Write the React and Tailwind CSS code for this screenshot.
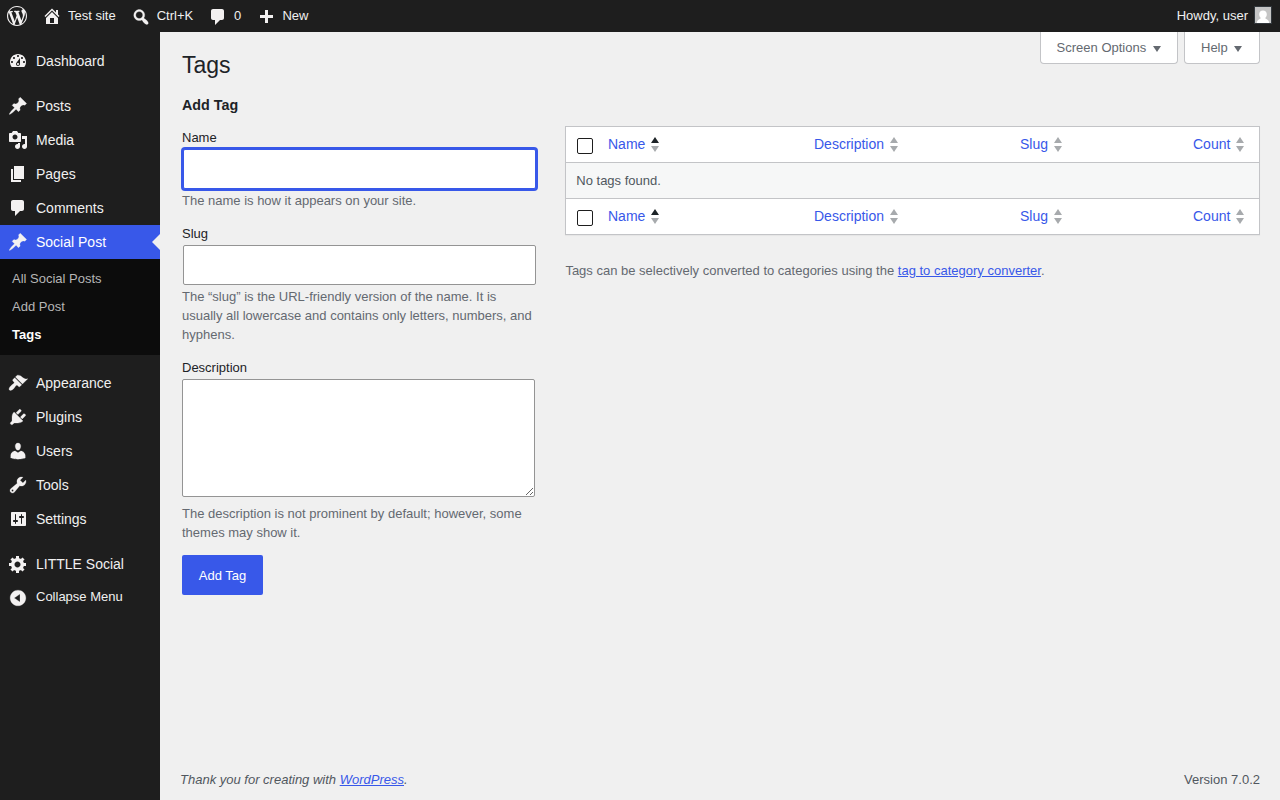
import React from "react";

const icons = {
	wordpress:
		"M20 10c0-5.51-4.49-10-10-10C4.48 0 0 4.49 0 10c0 5.52 4.48 10 10 10 5.51 0 10-4.48 10-10zM7.78 15.37L4.37 6.22c.55-.02 1.17-.08 1.17-.08.5-.06.44-1.13-.06-1.11 0 0-1.45.11-2.37.11-.18 0-.37 0-.58-.01C4.12 2.69 6.87 1.11 10 1.11c2.33 0 4.45.87 6.05 2.34-.68-.11-1.65.39-1.65 1.58 0 .74.45 1.36.9 2.1.35.61.55 1.36.55 2.46 0 1.49-1.4 5-1.4 5l-3.03-8.37c.54-.02.82-.17.82-.17.5-.05.44-1.25-.06-1.22 0 0-1.44.12-2.38.12-.87 0-2.33-.12-2.33-.12-.5-.03-.56 1.2-.06 1.22l.92.08 1.26 3.41zM17.41 10c.24-.64.74-1.87.43-4.25.7 1.29 1.05 2.71 1.05 4.25 0 3.29-1.73 6.24-4.4 7.78.97-2.59 1.94-5.2 2.92-7.78zM6.1 18.09C3.12 16.65 1.11 13.53 1.11 10c0-1.3.23-2.48.72-3.59C3.25 10.3 4.67 14.2 6.1 18.09zm4.03-6.63l2.58 6.98c-.86.29-1.76.45-2.71.45-.79 0-1.57-.11-2.29-.33.81-2.38 1.62-4.74 2.42-7.1z",
	home: "M16 8.5l1.53 1.53-1.06 1.06L10 4.6l-6.47 6.47-1.06-1.06L10 2.47l4 4V4h2v4.5zm-6-2.46l6 5.99V18H4v-5.97zM12 17v-5H8v5h4z",
	search:
		"M12.14 4.18c1.87 1.87 2.11 4.75.72 6.89.12.1.22.21.36.31.2.16.47.36.81.59.34.24.56.39.66.47.42.31.73.57.94.78.32.32.6.65.84 1 .25.35.44.69.59 1.04.14.35.21.68.18 1-.02.32-.14.59-.36.81s-.49.34-.81.36c-.31.02-.65-.04-.99-.19-.35-.14-.7-.34-1.04-.59-.35-.24-.68-.52-1-.84-.21-.21-.47-.52-.77-.93-.1-.13-.25-.35-.47-.66-.22-.32-.4-.57-.56-.78-.16-.2-.29-.35-.44-.5-2.07 1.09-4.69.76-6.44-.98-2.14-2.15-2.14-5.64 0-7.78 2.15-2.15 5.63-2.15 7.78 0zm-1.41 6.36c1.36-1.37 1.36-3.58 0-4.95-1.37-1.37-3.59-1.37-4.95 0-1.37 1.37-1.37 3.58 0 4.95 1.36 1.37 3.58 1.37 4.95 0z",
	plus: "M17 7v3h-5v5H9v-5H4V7h5V2h3v5h5z",
	dashboard:
		"M3.76 16h12.48c1.1-1.37 1.76-3.11 1.76-5 0-4.42-3.58-8-8-8s-8 3.58-8 8c0 1.89.66 3.63 1.76 5zM10 4c.55 0 1 .45 1 1s-.45 1-1 1-1-.45-1-1 .45-1 1-1zM6 6c.55 0 1 .45 1 1s-.45 1-1 1-1-.45-1-1 .45-1 1-1zm8 0c.55 0 1 .45 1 1s-.45 1-1 1-1-.45-1-1 .45-1 1-1zm-5.37 5.55L12 7v6c0 1.1-.9 2-2 2s-2-.9-2-2c0-.57.24-1.08.63-1.45zM4 10c.55 0 1 .45 1 1s-.45 1-1 1-1-.45-1-1 .45-1 1-1zm12 0c.55 0 1 .45 1 1s-.45 1-1 1-1-.45-1-1 .45-1 1-1zm-5 3c0-.55-.45-1-1-1s-1 .45-1 1 .45 1 1 1 1-.45 1-1z",
	post: "M10.44 3.02l1.82-1.82 6.36 6.35-1.83 1.82c-1.05-.68-2.48-.57-3.41.36l-.75.75c-.92.93-1.04 2.35-.35 3.41l-1.83 1.82-2.41-2.41-2.8 2.79c-.42.42-3.38 2.71-3.8 2.29s1.86-3.39 2.28-3.81l2.79-2.79L4.1 9.36l1.83-1.82c1.05.69 2.48.57 3.4-.36l.75-.75c.93-.92 1.05-2.35.36-3.41z",
	media: "M13 11V4c0-.55-.45-1-1-1h-1.67L9 1H5L3.67 3H2c-.55 0-1 .45-1 1v7c0 .55.45 1 1 1h10c.55 0 1-.45 1-1zM7 4.5c1.38 0 2.5 1.12 2.5 2.5S8.38 9.5 7 9.5 4.5 8.38 4.5 7 5.62 4.5 7 4.5zM14 6h5v10.5c0 1.38-1.12 2.5-2.5 2.5S14 17.88 14 16.5s1.12-2.5 2.5-2.5c.17 0 .34.02.5.05V9h-3V6zm-4 8.05V13h2v3.5c0 1.38-1.12 2.5-2.5 2.5S7 17.88 7 16.5 8.12 14 9.5 14c.17 0 .34.02.5.05z",
	page: "M6 15V2h10v13H6zm-1 1h8v2H3V5h2v11z",
	comments:
		"M5 2h9c1.1 0 2 .9 2 2v7c0 1.1-.9 2-2 2h-2l-5 5v-5H5c-1.1 0-2-.9-2-2V4c0-1.1.9-2 2-2z",
	appearance:
		"M14.48 11.06L7.41 3.99l1.5-1.5c.5-.56 2.3-.47 3.51.32 1.21.8 1.43 1.28 2.91 2.1 1.18.64 2.45 1.26 4.45.85zm-.71.71L6.7 4.7 4.93 6.47c-.39.39-.39 1.02 0 1.41l1.06 1.06c.39.39.39 1.03 0 1.42-.6.6-1.43 1.11-2.21 1.69-.35.26-.7.53-1.01.84C1.43 14.23.4 16.08 1.4 17.07c.99 1 2.84-.03 4.18-1.36.31-.31.58-.66.85-1.02.57-.78 1.08-1.61 1.69-2.21.39-.39 1.02-.39 1.41 0l1.06 1.06c.39.39 1.02.39 1.41 0z",
	plugins:
		"M13.11 4.36L9.87 7.6 8 5.73l3.24-3.24c.35-.34 1.05-.2 1.56.32.52.51.66 1.21.31 1.55zm-8 1.77l.91-1.12 9.01 9.01-1.19.84c-.71.71-2.63 1.16-3.82 1.16H6.14L4.9 17.26c-.59.59-1.54.59-2.12 0-.59-.58-.59-1.53 0-2.12l1.24-1.24v-3.88c0-1.13.4-3.19 1.09-3.89zm7.26 3.97l3.24-3.24c.34-.35 1.04-.21 1.55.31.52.51.66 1.21.31 1.55l-3.24 3.25z",
	users: "M10 9.25c-2.27 0-2.73-3.44-2.73-3.44C7 4.02 7.82 2 9.97 2c2.16 0 2.98 2.02 2.71 3.81 0 0-.41 3.44-2.68 3.44zm0 2.57L12.72 10c2.39 0 4.52 2.33 4.52 4.53v2.49s-3.65 1.13-7.24 1.13c-3.65 0-7.24-1.13-7.24-1.13v-2.49c0-2.25 1.94-4.48 4.47-4.48z",
	tools: "M16.68 9.77c-1.34 1.34-3.3 1.67-4.95.99l-5.41 6.52c-.99.99-2.59.99-3.58 0s-.99-2.59 0-3.57l6.52-5.42c-.68-1.65-.35-3.61.99-4.95 1.28-1.28 3.12-1.62 4.72-1.06l-2.89 2.89 2.82 2.82 2.86-2.87c.53 1.58.18 3.39-1.08 4.65zM3.81 16.21c.4.39 1.04.39 1.43 0 .4-.4.4-1.04 0-1.43-.39-.4-1.03-.4-1.43 0-.39.39-.39 1.03 0 1.43z",
	settings:
		"M18 16V4c0-.55-.45-1-1-1H4c-.55 0-1 .45-1 1v12c0 .55.45 1 1 1h13c.55 0 1-.45 1-1zM8 11h1c.55 0 1 .45 1 1s-.45 1-1 1H8v1.5c0 .28-.22.5-.5.5s-.5-.22-.5-.5V13H6c-.55 0-1-.45-1-1s.45-1 1-1h1V5.5c0-.28.22-.5.5-.5s.5.22.5.5V11zm5-2h-1c-.55 0-1-.45-1-1s.45-1 1-1h1V5.500c0-.28.22-.5.5-.5s.5.22.5.5V7h1c.55 0 1 .45 1 1s-.45 1-1 1h-1v5.500c0 .28-.22.5-.5.5s-.5-.22-.5-.5V9z",
	generic:
		"M18 12h-2.18c-.17.7-.44 1.35-.81 1.93l1.54 1.54-2.1 2.1-1.54-1.54c-.58.36-1.23.63-1.91.79V19H8v-2.18c-.68-.16-1.33-.43-1.91-.79l-1.54 1.54-2.12-2.12 1.54-1.54c-.36-.58-.63-1.23-.79-1.91H1V9.03h2.17c.16-.7.44-1.35.8-1.94L2.43 5.55l2.1-2.1 1.54 1.54c.58-.37 1.24-.64 1.93-.81V2h3v2.18c.68.16 1.33.43 1.91.79l1.54-1.54 2.12 2.12-1.54 1.54c.36.59.64 1.24.8 1.94H18V12zm-8.5 1.5c1.66 0 3-1.34 3-3s-1.34-3-3-3-3 1.34-3 3 1.34 3 3 3z",
	collapse:
		"M10 2.16c4.33 0 7.84 3.51 7.84 7.84s-3.51 7.84-7.84 7.84S2.16 14.33 2.16 10 5.71 2.16 10 2.16zm2 11.72V6.12L6.18 9.97z",
};

// thin glyphs get a hairline stroke so they keep their weight at 20px
const hairline = ["search", "post", "appearance", "plugins", "users", "tools", "collapse"];

const Icon = ({ name, className = "" }) => (
	<svg viewBox="0 0 20 20" className={`w-5 h-5 shrink-0 text-[#f3f1f1] fill-current ${className}`} aria-hidden="true">
		<path
			d={icons[name]}
			fillRule="evenodd"
			stroke={hairline.includes(name) ? "currentColor" : "none"}
			strokeWidth="0.25"
		/>
	</svg>
);

const MenuItem = ({ icon, label, active }) => (
	<a
		href="#"
		className={`relative flex items-center h-[34px] pl-2 gap-2 text-[14px] leading-[18px] ${
			active ? "bg-[#3858e9] text-white" : "text-[#f0f0f0]"
		}`}>
		<Icon name={icon} />
		<span>{label}</span>
		{active && (
			<span className="absolute right-0 top-[9px] border-y-8 border-r-8 border-y-transparent border-r-[#f0f0f0]" />
		)}
	</a>
);

const Sorter = ({ active }) => (
	<svg viewBox="0 0 8 15" className="w-2 h-[15px] mt-px ml-[6px] shrink-0" aria-hidden="true">
		<path d="M0 6L4 0l4 6z" fill={active ? "#1d2327" : "#a7aaad"} />
		<path d="M0 9h8l-4 6z" fill="#a7aaad" />
	</svg>
);

const HeadRow = () => (
	<div className="flex h-[35px] bg-white text-[14px] leading-[18px] text-[#3858e9]">
		<div className="w-[42px] pl-[11px] pt-[11px]">
			<span className="block w-4 h-4 rounded-[2px] border border-[#1e1e1e] bg-white" />
		</div>
		<div className="w-[206px] pb-[2px] flex items-center">
			Name <Sorter active />
		</div>
		<div className="w-[206px] pb-[2px] flex items-center">
			Description <Sorter />
		</div>
		<div className="w-[173px] pb-[2px] flex items-center">
			Slug <Sorter />
		</div>
		<div className="pb-[2px] flex items-center">
			Count <Sorter />
		</div>
	</div>
);

const ScreenTab = ({ label, className }) => (
	<button
		className={`flex items-center h-8 text-[13px] text-[#646970] bg-white border border-t-0 border-[#c3c4c7] rounded-b-[4px] ${className}`}>
		{label}
		<svg viewBox="0 0 8 6" className="w-2 h-[6px] ml-[6.5px] mt-[3px] fill-[#646970]" aria-hidden="true">
			<path d="M0 0h8L4 6z" />
		</svg>
	</button>
);

const App = () => {
	return (
		<div className="flex flex-col w-full h-screen overflow-hidden bg-[#f0f0f0] text-[13px] font-['Liberation_Sans',Arial,sans-serif]">
			{/* Admin bar */}
			<header className="flex h-8 shrink-0 bg-[#1e1e1e] text-[#f0f0f0] leading-8">
				<div className="w-[35px] pl-[7px] pt-[6px]">
					<Icon name="wordpress" />
				</div>
				<div className="w-[88.7px] pl-[7px] flex gap-[6px]">
					<Icon name="home" className="mt-[6px]" />
					<span>Test site</span>
				</div>
				<div className="w-[77.3px] pl-[7px] flex gap-[6px]">
					<Icon name="search" className="mt-[7px]" />
					<span>Ctrl+K</span>
				</div>
				<div className="w-[48.4px] pl-[7px] flex gap-[6px]">
					<Icon name="comments" className="mt-[7px]" />
					<span>0</span>
				</div>
				<div className="pl-[7px] flex gap-[6px]">
					<Icon name="plus" className="mt-[8px]" />
					<span>New</span>
				</div>
				<div className="ml-auto pr-2 flex gap-[6px]">
					<span>Howdy, user</span>
					<svg viewBox="0 0 18 18" className="w-[18px] h-[18px] mt-[6px]" aria-hidden="true">
						<path d="M0 0h18v18H0z" fill="#32373c" />
						<path d="M1 1h16v16H1z" fill="#c5c5c5" />
						<path d="M9 4.500c2.300 0 3.800 1.600 3.800 3.800 0 1.700-.7 2.800-1.600 3.600 0 1 3.800 1.200 4 5.100H2.800c.2-3.900 4-4.100 4-5.100-.9-.8-1.600-1.900-1.600-3.600 0-2.200 1.500-3.800 3.800-3.800z" fill="#fff" />
					</svg>
				</div>
			</header>

			<div className="flex flex-1 min-h-0">
				{/* Sidebar */}
				<nav className="w-40 shrink-0 pt-3 bg-[#1e1e1e]">
					<MenuItem icon="dashboard" label="Dashboard" />
					<div className="h-[11px]" />
					<MenuItem icon="post" label="Posts" />
					<MenuItem icon="media" label="Media" />
					<MenuItem icon="page" label="Pages" />
					<MenuItem icon="comments" label="Comments" />
					<MenuItem icon="post" label="Social Post" active />
					<div className="h-24 pt-[6px] pl-3 bg-[#0c0c0c] text-[#b6b6b6] leading-7">
						<a href="#" className="block">All Social Posts</a>
						<a href="#" className="block">Add Post</a>
						<a href="#" className="block font-bold text-white">Tags</a>
					</div>
					<div className="h-[11px]" />
					<MenuItem icon="appearance" label="Appearance" />
					<MenuItem icon="plugins" label="Plugins" />
					<MenuItem icon="users" label="Users" />
					<MenuItem icon="tools" label="Tools" />
					<MenuItem icon="settings" label="Settings" />
					<div className="h-[11px]" />
					<MenuItem icon="generic" label="LITTLE Social" />
					<button className="flex pl-2 pt-[7px] gap-2 h-[34px] text-[#f0f0f0] leading-[18px]">
						<Icon name="collapse" />
						<span>Collapse Menu</span>
					</button>
				</nav>

				<div className="flex flex-col flex-1 pl-5 pr-5">
					<div className="flex justify-between h-[62px] pl-[2px]">
						<h1 className="pt-[18px] text-[23px] leading-[30px] text-[#1d2327]">Tags</h1>
						<div className="flex gap-[6px]">
							<ScreenTab label="Screen Options" className="w-[138px] pl-[15.6px]" />
							<ScreenTab label="Help" className="w-[76px] pl-4" />
						</div>
					</div>

					<main className="flex flex-1 pl-[2px]">
						{/* Add tag form */}
						<form className="w-[354px] mr-[29px] text-[#646970] leading-[19px]">
							<h2 className="mt-[1px] text-[14.3px] font-bold text-[#1d2327] leading-5">Add Tag</h2>
							<label className="block mt-[13px] text-[#1d2327]">Name</label>
							<input
								className="block w-[353px] h-10 ml-px mt-[2px] px-3 bg-white rounded-[2px] border border-[#3858e9] shadow-[0_0_0_2px_#3858e9] outline-none"
								type="text"
							/>
							<p className="mt-[2px]">The name is how it appears on your site.</p>
							<label className="block mt-[14px] text-[#1d2327]">Slug</label>
							<input
								className="block w-[353px] h-10 ml-px mt-[2px] px-3 bg-white rounded-[2px] border border-[#949494] outline-none"
								type="text"
							/>
							<p className="mt-[2px]">
								The “slug” is the URL-friendly version of the name. It is usually all lowercase and contains only letters, numbers, and hyphens.
							</p>
							<label className="block mt-[14px] text-[#1d2327]">Description</label>
							<textarea className="block w-[353px] h-[118px] mt-[2px] px-3 bg-white rounded-[2px] border border-[#949494] resize outline-none" />
							<p className="mt-[7px]">
								The description is not prominent by default; however, some themes may show it.
							</p>
							<button type="button" className="block mt-[13px] w-[81px] h-10 rounded-[2px] bg-[#3858e9] text-white">
								Add Tag
							</button>
						</form>

						{/* Tags table */}
						<section className="flex-1 pt-8">
							<div className="border border-[#c3c4c7] bg-white shadow-[0_1px_1px_rgba(0,0,0,0.04)]">
								<HeadRow />
								<div className="h-[37px] pl-[10.3px] leading-[35px] border-y border-[#c3c4c7] bg-[#f6f7f7] text-[#50575e]">
									No tags found.
								</div>
								<HeadRow />
							</div>
							<p className="mt-[26px] pl-[0.4px] leading-5 text-[#646970]">
								Tags can be selectively converted to categories using the{" "}
								<a href="#" className="text-[#3858e9] underline">tag to category converter</a>.
							</p>
						</section>
					</main>

					<footer className="flex justify-between pb-[10px] leading-5 text-[#50575e]">
						<p className="italic">
							Thank you for creating with <a href="#" className="text-[#3858e9] underline">WordPress</a>.
						</p>
						<p>Version 7.0.2</p>
					</footer>
				</div>
			</div>
		</div>
	);
};

export default App;
